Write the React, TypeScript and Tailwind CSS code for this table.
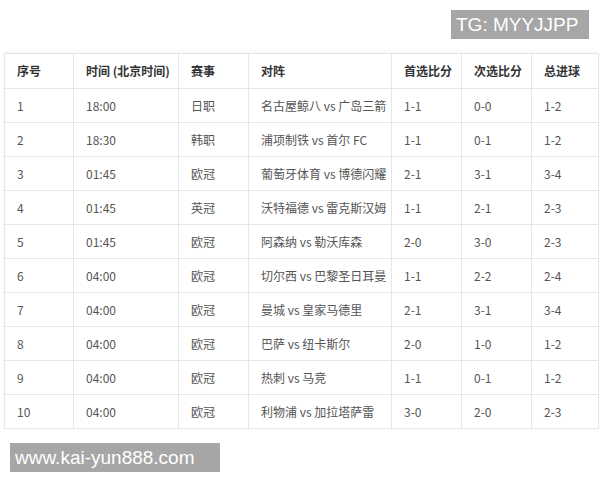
const rows = [
  ["1", "18:00", "日职", "名古屋鲸八 vs 广岛三箭", "1-1", "0-0", "1-2"],
  ["2", "18:30", "韩职", "浦项制铁 vs 首尔 FC", "1-1", "0-1", "1-2"],
  ["3", "01:45", "欧冠", "葡萄牙体育 vs 博德闪耀", "2-1", "3-1", "3-4"],
  ["4", "01:45", "英冠", "沃特福德 vs 雷克斯汉姆", "1-1", "2-1", "2-3"],
  ["5", "01:45", "欧冠", "阿森纳 vs 勒沃库森", "2-0", "3-0", "2-3"],
  ["6", "04:00", "欧冠", "切尔西 vs 巴黎圣日耳曼", "1-1", "2-2", "2-4"],
  ["7", "04:00", "欧冠", "曼城 vs 皇家马德里", "2-1", "3-1", "3-4"],
  ["8", "04:00", "欧冠", "巴萨 vs 纽卡斯尔", "2-0", "1-0", "1-2"],
  ["9", "04:00", "欧冠", "热刺 vs 马竞", "1-1", "0-1", "1-2"],
  ["10", "04:00", "欧冠", "利物浦 vs 加拉塔萨雷", "3-0", "2-0", "2-3"],
];

const headers = ["序号", "时间 (北京时间)", "赛事", "对阵", "首选比分", "次选比分", "总进球"];
const widths = ["w-[69px]", "w-[105px]", "w-[70px]", "w-[143px]", "w-[70px]", "w-[70px]", "w-[67px]"];

export default function App() {
  return (
    <div className="w-[600px] h-[480px] bg-white overflow-hidden font-['Noto_Sans_CJK_SC',sans-serif]">
      <div className="flex justify-end pt-[10px] pr-[11px]">
        <div className="w-[138px] h-[29px] bg-[#a6a6a6] text-white text-[19px] leading-[29px] pl-[5px] font-['Liberation_Sans',sans-serif]">
          TG: MYYJJPP
        </div>
      </div>

      <div className="mt-[14px] ml-[4px] w-[594px] shadow-[0_-1px_3px_rgba(0,0,0,0.06)]">
        <table className="table-fixed border-collapse w-[594px] text-[12px]">
          <colgroup>
            {widths.map((w, i) => (
              <col key={i} className={w} />
            ))}
          </colgroup>
          <thead>
            <tr className="h-[35px]">
              {headers.map((h) => (
                <th
                  key={h}
                  className="border border-[#e6e6e6] text-left font-bold text-[#333] pl-[12px] whitespace-nowrap"
                >
                  {h}
                </th>
              ))}
            </tr>
          </thead>
          <tbody>
            {rows.map((r) => (
              <tr key={r[0]} className="h-[34px]">
                {r.map((c, i) => (
                  <td
                    key={i}
                    className="border border-[#e6e6e6] text-[#555] pl-[12px] whitespace-nowrap"
                  >
                    {c}
                  </td>
                ))}
              </tr>
            ))}
          </tbody>
        </table>
      </div>

      <div className="mt-[14px] ml-[10px] w-[210px] h-[29px] bg-[#a6a6a6] text-white text-[19px] leading-[29px] pl-[5px] font-['Liberation_Sans',sans-serif]">
        www.kai-yun888.com
      </div>
    </div>
  );
}
